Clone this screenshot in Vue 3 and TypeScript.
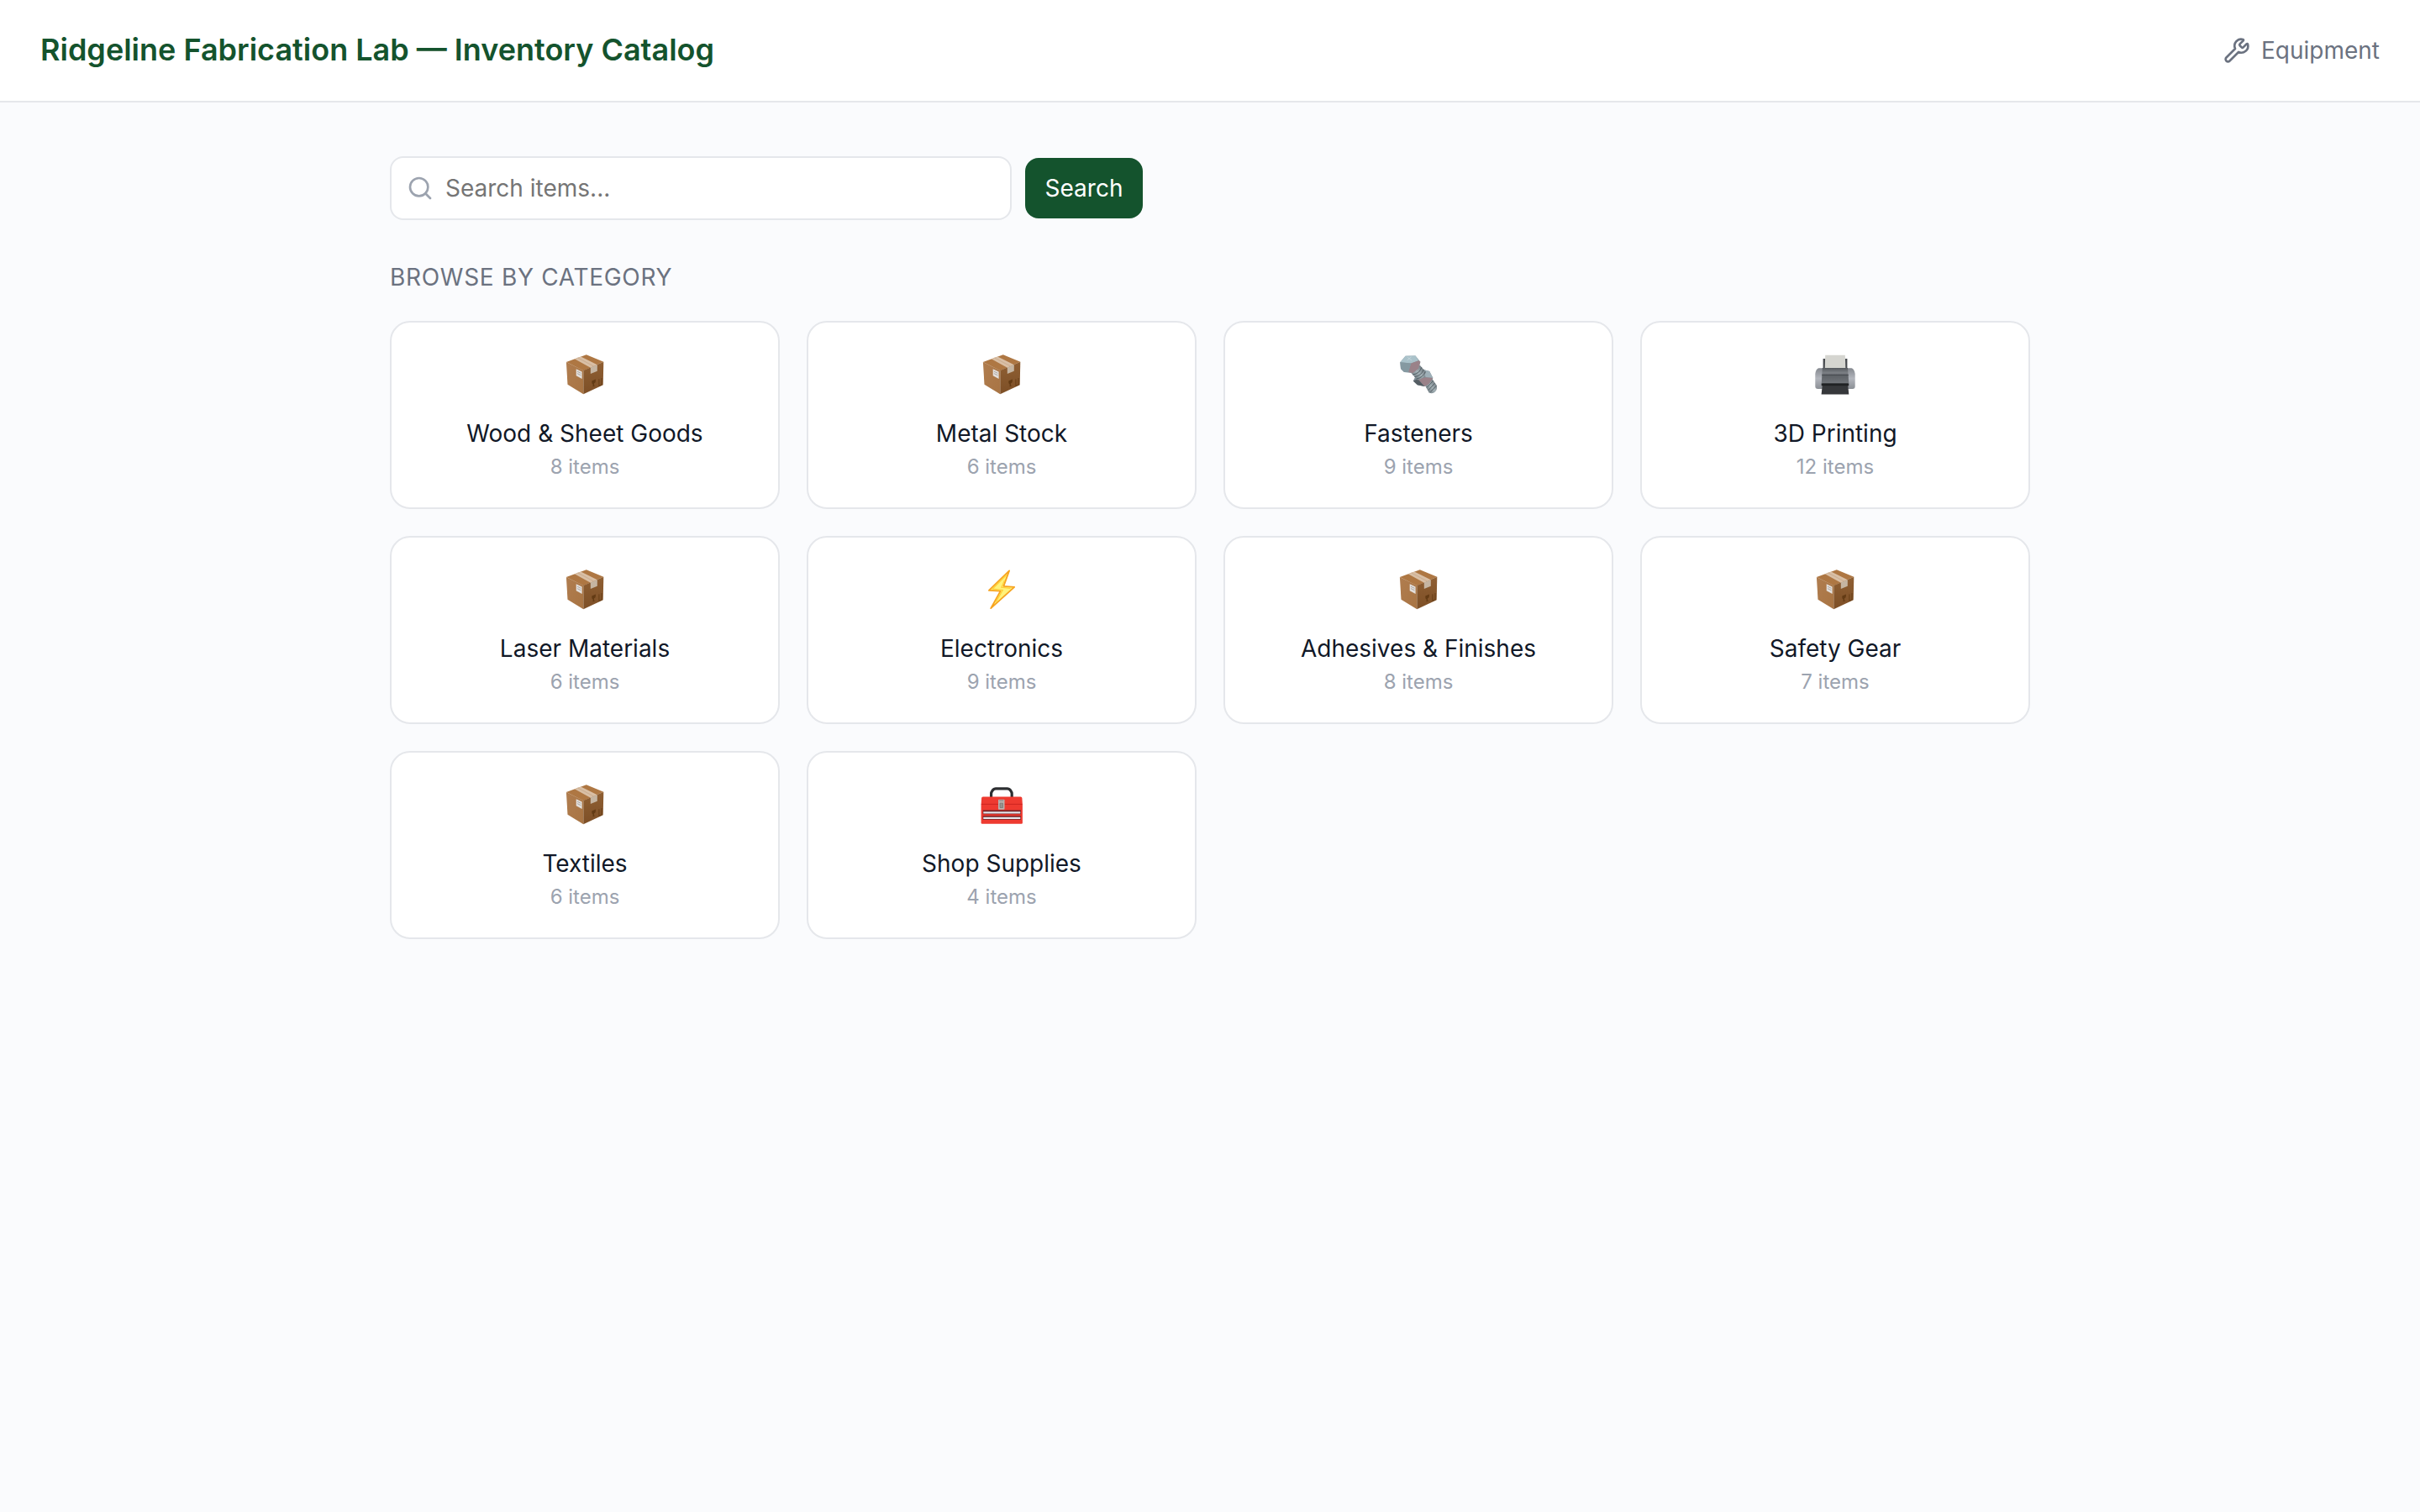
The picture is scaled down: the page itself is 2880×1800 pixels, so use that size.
<script setup lang="ts">
type IconName = 'box' | 'screw' | 'printer' | 'bolt' | 'toolbox'

interface Category {
  name: string
  count: number
  icon: IconName
}

const categories: Category[] = [
  { name: 'Wood & Sheet Goods', count: 8, icon: 'box' },
  { name: 'Metal Stock', count: 6, icon: 'box' },
  { name: 'Fasteners', count: 9, icon: 'screw' },
  { name: '3D Printing', count: 12, icon: 'printer' },
  { name: 'Laser Materials', count: 6, icon: 'box' },
  { name: 'Electronics', count: 9, icon: 'bolt' },
  { name: 'Adhesives & Finishes', count: 8, icon: 'box' },
  { name: 'Safety Gear', count: 7, icon: 'box' },
  { name: 'Textiles', count: 6, icon: 'box' },
  { name: 'Shop Supplies', count: 4, icon: 'toolbox' },
]
</script>

<template>
  <div class="page">
    <svg class="defs" width="0" height="0" aria-hidden="true">
      <defs>
        <linearGradient id="boxLeft" x1="0" y1="0" x2="1" y2="1">
          <stop offset="0" stop-color="#b07d4f" />
          <stop offset="1" stop-color="#a87443" />
        </linearGradient>
        <linearGradient id="boxRight" x1="0" y1="0" x2="0" y2="1">
          <stop offset="0" stop-color="#8f5f33" />
          <stop offset="1" stop-color="#7d4f26" />
        </linearGradient>
        <linearGradient id="steel" x1="0" y1="1" x2="1" y2="0">
          <stop offset="0" stop-color="#59656b" />
          <stop offset="0.5" stop-color="#a3b0b5" />
          <stop offset="1" stop-color="#565f66" />
        </linearGradient>
        <linearGradient id="printerBody" x1="0" y1="0" x2="0" y2="1">
          <stop offset="0" stop-color="#55595e" />
          <stop offset="0.3" stop-color="#7b7f84" />
          <stop offset="0.5" stop-color="#5e6267" />
          <stop offset="1" stop-color="#73777c" />
        </linearGradient>
        <linearGradient id="printerSide" x1="0" y1="0" x2="0" y2="1">
          <stop offset="0" stop-color="#85898f" />
          <stop offset="0.5" stop-color="#b3b6bd" />
          <stop offset="1" stop-color="#8b8f95" />
        </linearGradient>
      </defs>
    </svg>

    <header class="header">
      <h1 class="title">Ridgeline Fabrication Lab — Inventory Catalog</h1>
      <a class="equipment">
        <svg width="32" height="32" viewBox="0 0 24 24" fill="none" stroke="currentColor" stroke-width="2" stroke-linecap="round" stroke-linejoin="round">
          <path d="M14.7 6.3a1 1 0 0 0 0 1.4l1.6 1.6a1 1 0 0 0 1.4 0l3.106-3.105c.32-.322.863-.22.983.218a6 6 0 0 1-8.259 7.057l-7.91 7.91a1 1 0 0 1-2.999-3l7.91-7.91a6 6 0 0 1 7.057-8.259c.438.12.54.662.219.984z" />
        </svg>
        <span>Equipment</span>
      </a>
    </header>

    <main class="main">
      <form class="search" @submit.prevent>
        <label class="field">
          <svg width="32" height="32" viewBox="0 0 24 24" fill="none" stroke="currentColor" stroke-width="2" stroke-linecap="round" stroke-linejoin="round">
            <circle cx="11" cy="11" r="8" />
            <path d="m21 21-4.3-4.3" />
          </svg>
          <input class="input" type="text" placeholder="Search items..." />
        </label>
        <button class="button" type="submit">Search</button>
      </form>

      <h2 class="heading">Browse by category</h2>

      <div class="grid">
        <a v-for="category in categories" :key="category.name" class="card">
          <svg v-if="category.icon === 'box'" class="icon" viewBox="0 0 56 56">
            <path d="M5.9 13 29.8 4.2 50.3 12.7 26.3 23.2Z" fill="#ae7743" />
            <path d="M5.9 13 26.3 23V51.3L7.5 39.7Z" fill="url(#boxLeft)" />
            <path d="M26.3 23 50.3 12.7 49.7 40.3 26.3 51.3Z" fill="url(#boxRight)" />
            <path d="M15.8 9.2 23.2 6.6 42.8 16.3 34.8 19.7Z" fill="#d9bfa5" />
            <path d="M19.4 7.9 38.7 18" stroke="#c6a88b" stroke-width="0.8" />
            <path d="M34.8 19.6 42.8 16.2V23.8L34.8 26.9Z" fill="#c5b5a2" />
            <path d="M17.7 21.2 24.6 24.4V33L17.7 29.2Z" fill="#e3dfdc" />
            <path d="M19 24.2 23.4 26.3M19 26.6 23.4 28.8" stroke="#a5a09b" stroke-width="0.9" />
            <path d="M36.3 35.6 41 33.6 40.7 36.9 39 38.6V40.7L40.5 41.1 37.6 42.4V39.4L36.4 38.3Z" fill="#633b14" />
            <path d="M44.9 33.4V40.8M48 32.1V39.4M44.4 41.6 48.6 39.8" stroke="#633b14" stroke-width="0.9" />
          </svg>

          <svg v-else-if="category.icon === 'screw'" class="icon" viewBox="0 0 56 56">
            <path d="M35.5 40 44 32.5 49.6 40.6Q51 45 48 48.6 44.6 51.4 40.6 49.4Z" fill="url(#steel)" />
            <path d="M38 43.4 45.6 35.4M40 46.4 47.6 38.2M42.4 48.6 49.4 41.3" stroke="#4f595f" stroke-width="0.9" />
            <path d="M21.8 35.5 27 25 34 22 41.2 23.9 45.4 32 40.6 38.9 35.2 41.9 26.8 40.3Z" fill="#7f8d95" />
            <path d="M34 22 41.2 23.9 45.4 32 36.7 31.2Z" fill="#9fb0b8" />
            <path d="M27.4 33.2 36.7 31.2 45.4 32 40.6 38.9 35.2 41.9Z" fill="#9a8289" />
            <path d="M21.8 35.5 27.4 33.2 35.2 41.9 26.8 40.3Z" fill="#545d63" />
            <path d="M18.4 25 29.8 16.8 37 25Q34.9 33 27 34.4Z" fill="url(#steel)" />
            <path d="M21.2 28Q29.5 27 31.8 19.2M23.4 30.6Q31.6 29.4 34.2 21.8M25.6 33Q33.8 31.6 36.3 24.4" fill="none" stroke="#4f5a60" stroke-width="0.9" />
            <path d="M6.3 13.3 12.7 5.7 24.5 5.5 30.4 12.7 28 20.7 21.3 26.2 11 25 7 21Z" fill="#8d9da5" />
            <path d="M6.3 13.3 12.7 5.7 24.5 5.5 28.2 11.3 19.3 14.5Z" fill="#aac2ca" />
            <path d="M14.7 10.8 19.6 6.8M15.2 7.4 20 11" stroke="#c3d5da" stroke-width="1" />
            <path d="M19.3 14.5 28.2 11.3 30.4 12.7 28 20.7 21.3 26.2 16 24.8Z" fill="#9a8289" />
            <path d="M6.3 13.3 19.3 14.5 16 25 11 25 7 21Z" fill="#8599a1" />
          </svg>

          <svg v-else-if="category.icon === 'printer'" class="icon" viewBox="0 0 56 56">
            <path d="M13.6 9H16.5L17.5 21H13.6ZM42.4 9H40L39 21H42.4Z" fill="#484b4f" />
            <path d="M16.2 4.7H39.8L40.4 21H15.7Z" fill="#d5d5d0" />
            <path d="M8.4 20.3H47.5Q50.8 21.5 51.7 27V42Q51.7 45 48.7 45H7.4Q4.3 45 4.3 42V27Q5 21.5 8.4 20.3Z" fill="url(#printerSide)" />
            <path d="M12.8 20H43L44.3 39.4H11.7Z" fill="url(#printerBody)" />
            <path d="M12.2 28.4H43.8" stroke="#43474b" stroke-width="1" />
            <path d="M13 38.5H43L44.3 51.4H11.6Z" fill="#36383b" />
            <path d="M11.7 38.6H44.2V41.2H11.7Z" fill="#202224" />
          </svg>

          <svg v-else-if="category.icon === 'bolt'" class="icon" viewBox="0 0 56 56">
            <path d="M37.1 5.4 12.9 28.8 26.6 29.6 15.2 50.2 43.2 24.8 30.4 23.9Z" fill="#fff27a" stroke="#f7a421" stroke-width="1.8" stroke-linejoin="round" />
            <path d="M33.7 10.5 17.3 27 29.3 28.5 21.3 42.4M38.5 26.3 27.8 25.3 31.5 17" fill="none" stroke="#ffcf38" stroke-width="1.2" />
          </svg>

          <svg v-else class="icon" viewBox="0 0 56 56">
            <path d="M15.6 20V14.8Q15.6 13 16.9 11.4L18.2 9.9Q19.2 8.8 20.9 8.8H34.9Q36.6 8.8 37.6 9.9L38.9 11.4Q40.2 13 40.2 14.8V20" fill="none" stroke="#2c2e31" stroke-width="3.2" />
            <path d="M5.8 18.4H50.6Q52.2 18.4 52.4 20L52.9 28V49.4Q52.9 50.7 51.6 50.7H5Q3.6 50.7 3.6 49.4V28L4.1 20Q4.3 18.4 5.8 18.4Z" fill="#ee3a30" />
            <path d="M3.8 27.4H52.7" stroke="#c9231f" stroke-width="0.9" />
            <path d="M5.7 34.6H50.9V39.2H5.7ZM5.7 41.2H50.9V45.7H5.7Z" fill="#702225" />
            <path d="M6.3 36.2H50.3V38.4H6.3ZM6.3 42.7H50.3V44.9H6.3Z" fill="#e4e4ea" />
            <rect x="24" y="21.8" width="7.5" height="12" rx="0.8" fill="#b9b2ae" />
            <path d="M25.3 23H30.2M26 26.2H29.5V31.5H26Z" fill="#96928e" stroke="#7d7773" stroke-width="0.8" />
          </svg>

          <span class="name">{{ category.name }}</span>
          <span class="count">{{ category.count }} items</span>
        </a>
      </div>
    </main>
  </div>
</template>

<style>
body {
  background: #fafbfd;
}
</style>

<style scoped>
.page {
  min-height: 1800px;
  background: #fafbfd;
  color: #111827;
  font-family: Inter, 'Liberation Sans', sans-serif;
  font-size: 28px;
  line-height: 42px;
}

.defs {
  position: absolute;
}

.header {
  display: flex;
  align-items: center;
  justify-content: space-between;
  box-sizing: border-box;
  height: 122px;
  padding: 0 48px;
  background: #fff;
  border-bottom: 2px solid #e5e7eb;
}

.title {
  margin: 0 0 2px;
  color: #14532d;
  font-size: 36px;
  font-weight: 600;
}

.equipment {
  display: flex;
  align-items: center;
  gap: 13px;
  color: #6b7280;
}

.main {
  box-sizing: border-box;
  width: 1952px;
  margin: 0 auto;
  padding-top: 64px;
}

.search {
  display: flex;
  align-items: center;
  gap: 16px;
}

.field {
  display: flex;
  align-items: center;
  gap: 14px;
  box-sizing: border-box;
  width: 740px;
  height: 76px;
  padding: 0 18px;
  background: #fff;
  border: 2px solid #e5e7eb;
  border-radius: 16px;
  color: #9ca3af;
}

.input {
  flex: 1;
  min-width: 0;
  padding: 0;
  border: 0;
  outline: 0;
  background: transparent;
  color: #111827;
  font: inherit;
}

.input::placeholder {
  color: #757575;
}

.button {
  width: 140px;
  height: 72px;
  padding: 0;
  border: 0;
  border-radius: 16px;
  background: #14532d;
  color: #fff;
  font: inherit;
}

.heading {
  margin: 47px 0 31px;
  color: #6b7280;
  font-size: 28px;
  font-weight: 400;
  letter-spacing: 0.7px;
  text-transform: uppercase;
}

.grid {
  display: grid;
  grid-template-columns: repeat(4, 1fr);
  gap: 32px;
}

.card {
  display: flex;
  flex-direction: column;
  align-items: center;
  box-sizing: border-box;
  height: 224px;
  padding-top: 34px;
  background: #fff;
  border: 2px solid #e5e7eb;
  border-radius: 24px;
}

.icon {
  width: 56px;
  height: 56px;
  margin-bottom: 21px;
}

.count {
  margin-top: 1px;
  color: #9ca3af;
  font-size: 24px;
  line-height: 36px;
}
</style>
